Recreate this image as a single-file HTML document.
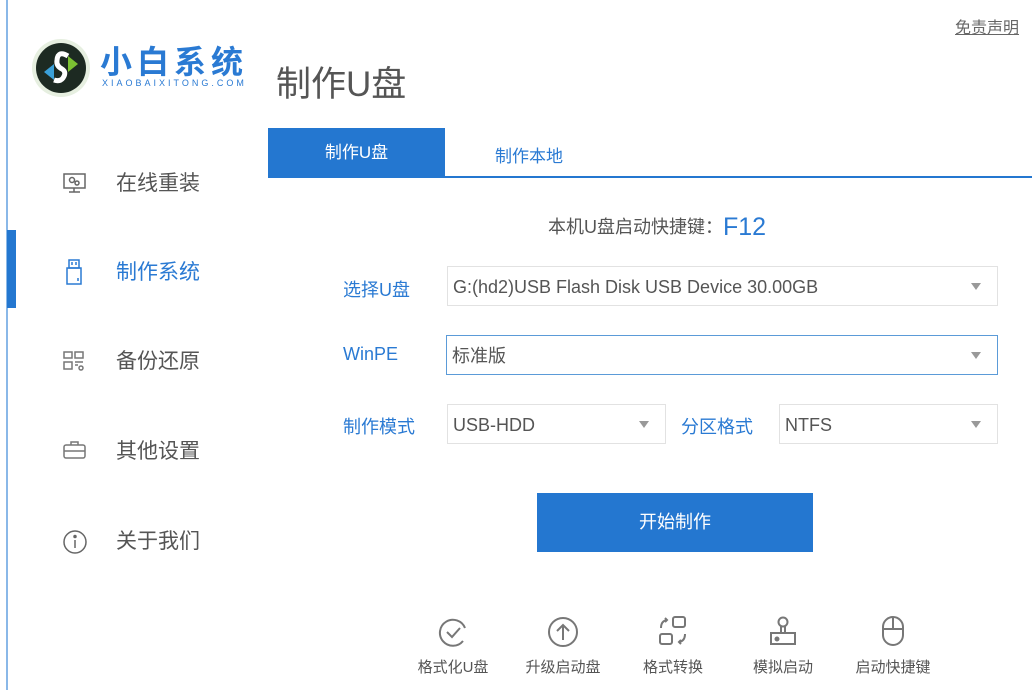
<!DOCTYPE html>
<html><head><meta charset="utf-8"><style>
*{margin:0;padding:0;box-sizing:border-box}
body{width:1032px;height:690px;background:#fff;position:relative;overflow:hidden;font-family:"Liberation Sans","Noto Sans CJK SC",sans-serif;color:#555}
.a{position:absolute;white-space:nowrap}
.side{font-size:21px;color:#555}
.lbl{font-size:18px;color:#2a7ad3}
.box{position:absolute;border:1px solid #e2e2e2;background:#fff;font-size:18px;color:#555;padding-left:5px;line-height:40px}
.box:after{content:"";position:absolute;right:16px;top:16px;border-left:5px solid transparent;border-right:5px solid transparent;border-top:7px solid #999}
.bi{font-size:15px;color:#555;text-align:center;width:100px}
svg{position:absolute}
</style></head><body>
<div class="a" style="left:6px;top:0;width:2px;height:690px;background:#8ab8e8"></div>
<div class="a" style="left:7px;top:230px;width:9px;height:78px;background:#2477d0"></div>

<svg style="left:30px;top:36px" width="62" height="62" viewBox="0 0 62 62">
<circle cx="31" cy="32" r="29" fill="#e6efe0"/>
<circle cx="31" cy="32" r="25" fill="#1d2a22"/>
<path d="M14 36 L24 28 L24 44 Z" fill="#3aa0d8"/>
<path d="M48 28 L38 36 L38 20 Z" fill="#7cc232"/>
<path d="M38 20 Q28 14 27 24 Q26 30 32 33 Q37 36 33 42 Q30 46 24 44" stroke="#fff" stroke-width="5" fill="none"/>
</svg>
<div class="a" style="left:100px;top:37px;font-size:32px;color:#2a7ad3;font-weight:bold;letter-spacing:5px">小白系统</div>
<div class="a" style="left:102px;top:78px;font-size:9px;color:#2a7ad3;letter-spacing:3px">XIAOBAIXITONG.COM</div>
<div class="a" style="left:276px;top:56px;font-size:35px;color:#555">制作U盘</div>
<div class="a" style="left:955px;top:14px;font-size:16px;color:#666;text-decoration:underline">免责声明</div>

<div class="a" style="left:268px;top:128px;width:177px;height:49px;background:#2477d0;color:#fff;font-size:17px;text-align:center;line-height:50px">制作U盘</div>
<div class="a" style="left:495px;top:142px;font-size:17px;color:#2a7ad3">制作本地</div>
<div class="a" style="left:268px;top:176px;width:764px;height:2px;background:#2477d0"></div>

<svg style="left:62px;top:172px" width="26" height="22" viewBox="0 0 26 22" fill="none" stroke="#666" stroke-width="1.5"><rect x="2" y="2" width="21" height="14"/><circle cx="10" cy="8" r="2.5"/><circle cx="15" cy="11" r="2"/><path d="M12 16v4M7 20h11"/></svg>
<div class="a side" style="left:116px;top:167px">在线重装</div>
<svg style="left:66px;top:259px" width="16" height="26" viewBox="0 0 16 26" fill="none" stroke="#2a7ad3" stroke-width="1.5"><rect x="3" y="1" width="10" height="8"/><rect x="1" y="9" width="14" height="16"/><path d="M6 3v3M10 3v3M12 19v3"/></svg>
<div class="a side" style="left:116px;top:256px;color:#2a7ad3">制作系统</div>
<svg style="left:63px;top:351px" width="22" height="20" viewBox="0 0 22 20" fill="none" stroke="#777" stroke-width="1.5"><rect x="1" y="1" width="8" height="6"/><rect x="12" y="1" width="8" height="6"/><rect x="1" y="11" width="8" height="7"/><path d="M12 11h8M12 14h3"/><circle cx="18" cy="17" r="2"/></svg>
<div class="a side" style="left:116px;top:345px">备份还原</div>
<svg style="left:63px;top:440px" width="24" height="20" viewBox="0 0 24 20" fill="none" stroke="#777" stroke-width="1.5"><rect x="1" y="5" width="21" height="13" rx="2"/><path d="M8 5V2h7v3M1 11h21"/></svg>
<div class="a side" style="left:116px;top:435px">其他设置</div>
<svg style="left:62px;top:529px" width="26" height="26" viewBox="0 0 26 26" fill="none" stroke="#666" stroke-width="1.5"><circle cx="13" cy="13" r="11"/><path d="M13 11v8"/><circle cx="13" cy="7.5" r="1" fill="#666"/></svg>
<div class="a side" style="left:116px;top:525px">关于我们</div>

<div class="a" style="left:548px;top:213px;font-size:18px;color:#555">本机U盘启动快捷键：<span style="font-size:25px;color:#2a7ad3;vertical-align:-2px">F12</span></div>

<div class="a lbl" style="left:343px;top:276px">选择U盘</div>
<div class="box" style="left:447px;top:266px;width:551px;height:40px">G:(hd2)USB Flash Disk USB Device 30.00GB</div>
<div class="a lbl" style="left:343px;top:344px">WinPE</div>
<div class="box" style="left:446px;top:335px;width:552px;height:40px;border:1.5px solid #5b9bd8">标准版</div>
<div class="a lbl" style="left:343px;top:413px">制作模式</div>
<div class="box" style="left:447px;top:404px;width:219px;height:40px">USB-HDD</div>
<div class="a lbl" style="left:681px;top:413px">分区格式</div>
<div class="box" style="left:779px;top:404px;width:219px;height:40px">NTFS</div>

<div class="a" style="left:537px;top:493px;width:276px;height:59px;background:#2477d0;color:#fff;font-size:18px;text-align:center;line-height:59px">开始制作</div>

<svg style="left:437px;top:616px" width="32" height="32" viewBox="0 0 32 32" fill="none" stroke="#777" stroke-width="2"><path d="M28 12A13 13 0 1 0 26 25"/><path d="M10 16l5 5 8-9"/></svg>
<svg style="left:547px;top:616px" width="32" height="32" viewBox="0 0 32 32" fill="none" stroke="#777" stroke-width="2"><circle cx="16" cy="16" r="14"/><path d="M16 24V9M10 15l6-6 6 6"/></svg>
<svg style="left:657px;top:615px" width="32" height="32" viewBox="0 0 32 32" fill="none" stroke="#777" stroke-width="2"><rect x="16" y="2" width="12" height="10" rx="2"/><rect x="3" y="19" width="12" height="10" rx="2"/><path d="M4 13Q4 6 10 5M8 3l2 2-2 2M28 19Q28 26 22 27M24 25l-2 2 2 2"/></svg>
<svg style="left:767px;top:615px" width="32" height="32" viewBox="0 0 32 32" fill="none" stroke="#777" stroke-width="2"><circle cx="16" cy="7" r="4.5"/><path d="M14 11v7M18 11v7M4 18h24v11H4z"/><circle cx="10" cy="24" r="1.5" fill="#777"/></svg>
<svg style="left:881px;top:615px" width="24" height="32" viewBox="0 0 24 32" fill="none" stroke="#777" stroke-width="2"><rect x="2" y="2" width="20" height="28" rx="10"/><path d="M2 14h20M12 2v12"/></svg>
<div class="a bi" style="left:403px;top:656px">格式化U盘</div>
<div class="a bi" style="left:513px;top:656px">升级启动盘</div>
<div class="a bi" style="left:623px;top:656px">格式转换</div>
<div class="a bi" style="left:733px;top:656px">模拟启动</div>
<div class="a bi" style="left:843px;top:656px">启动快捷键</div>
</body></html>
